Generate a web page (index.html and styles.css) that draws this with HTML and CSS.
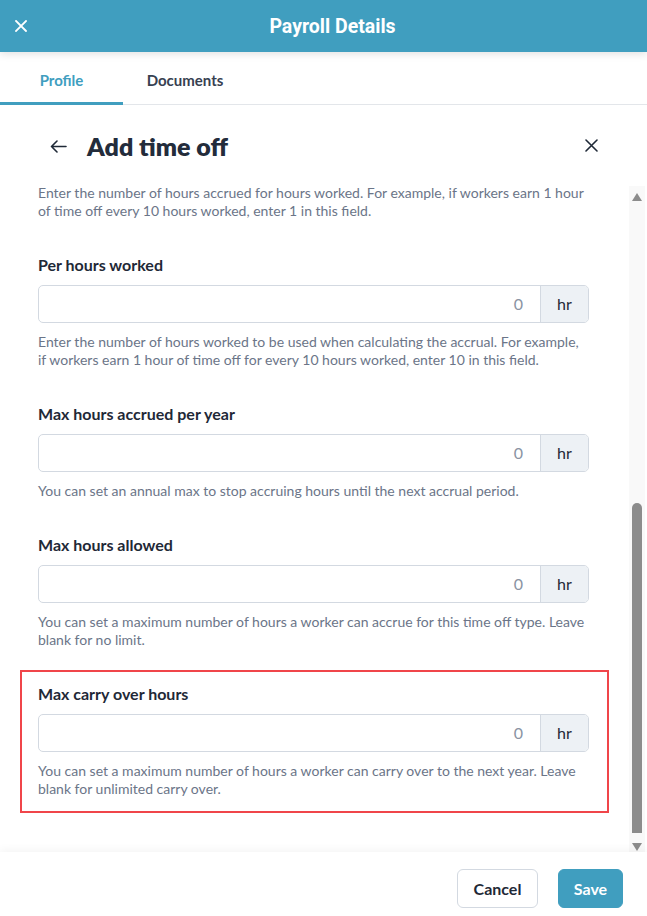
FILE: index.html
```html
<!DOCTYPE html>
<html lang="en">
<head>
<meta charset="utf-8">
<title>Payroll Details</title>
<link rel="stylesheet" href="styles.css">
</head>
<body>
<div class="app">
  <header class="topbar">
    <button class="topbar-close" aria-label="Close">
      <svg width="12" height="12" viewBox="0 0 12 12"><path d="M1 1L11 11M11 1L1 11" stroke="#fff" stroke-width="1.8" stroke-linecap="square"/></svg>
    </button>
    <h1 class="topbar-title">Payroll Details</h1>
    <span class="topbar-spacer"></span>
  </header>

  <nav class="tabs">
    <div class="tab tab-active">Profile</div>
    <div class="tab">Documents</div>
  </nav>

  <div class="panel-head">
    <svg class="back" width="17" height="13" viewBox="0 0 17 13"><path d="M16 6.5H1.5M7 1L1.5 6.5L7 12" fill="none" stroke="#1f2937" stroke-width="1.6" stroke-linecap="round" stroke-linejoin="round"/></svg>
    <h2 class="panel-title">Add time off</h2>
    <svg class="panel-close" width="13" height="13" viewBox="0 0 13 13"><path d="M1 1L12 12M12 1L1 12" stroke="#1f2937" stroke-width="1.6" stroke-linecap="round"/></svg>
  </div>

  <div class="scroll">
    <div class="content">
      <p class="help">Enter the number of hours accrued for hours worked. For example, if workers earn 1 hour of time off every 10 hours worked, enter 1 in this field.</p>

      <div class="field">
        <label class="label">Per hours worked</label>
        <div class="input-group"><div class="input">0</div><div class="addon">hr</div></div>
        <p class="help">Enter the number of hours worked to be used when calculating the accrual. For example, if workers earn 1 hour of time off for every 10 hours worked, enter 10 in this field.</p>
      </div>

      <div class="field">
        <label class="label">Max hours accrued per year</label>
        <div class="input-group"><div class="input">0</div><div class="addon">hr</div></div>
        <p class="help">You can set an annual max to stop accruing hours until the next accrual period.</p>
      </div>

      <div class="field">
        <label class="label">Max hours allowed</label>
        <div class="input-group"><div class="input">0</div><div class="addon">hr</div></div>
        <p class="help">You can set a maximum number of hours a worker can accrue for this time off type. Leave blank for no limit.</p>
      </div>

      <div class="field field-highlight">
        <label class="label">Max carry over hours</label>
        <div class="input-group"><div class="input">0</div><div class="addon">hr</div></div>
        <p class="help">You can set a maximum number of hours a worker can carry over to the next year. Leave blank for unlimited carry over.</p>
      </div>
    </div>

    <div class="scrollbar">
      <span class="arrow arrow-up"></span>
      <span class="thumb-gap"></span>
      <span class="thumb"></span>
      <span class="arrow arrow-down"></span>
    </div>
  </div>

  <footer class="footer">
    <button class="btn btn-cancel">Cancel</button>
    <button class="btn btn-save">Save</button>
  </footer>
</div>
</body>
</html>
```

FILE: styles.css
```css
* { box-sizing: border-box; }
html, body { margin: 0; padding: 0; }
body {
  font-family: Lato, "Noto Sans", "Liberation Sans", sans-serif;
  background: #fff;
  color: #1f2937;
  width: 647px;
  height: 916px;
  overflow: hidden;
}
.app {
  display: flex;
  flex-direction: column;
  height: 916px;
}
.topbar {
  height: 52px;
  flex: none;
  background: #409ebf;
  display: grid;
  grid-template-columns: 60px 1fr 60px;
  align-items: center;
  box-shadow: 0 2px 8px rgba(0,0,0,0.12);
  position: relative;
  z-index: 2;
}
.topbar-close {
  background: none;
  border: 0;
  padding: 0;
  margin-left: 15px;
  width: 12px;
  height: 12px;
  display: flex;
}
.topbar-title {
  margin: 0;
  text-align: center;
  font-family: Roboto, "Liberation Sans", sans-serif;
  font-weight: 700;
  font-size: 19.5px;
  color: #fff;
  padding-left: 18px;
}
.tabs {
  height: 53px;
  flex: none;
  display: flex;
  border-bottom: 1px solid #e3e6ea;
}
.tab {
  width: 123px;
  text-align: center;
  font-size: 15px;
  font-weight: 700;
  color: #374151;
  padding-top: 19px;
  border-bottom: 3px solid transparent;
  margin-bottom: -1px;
}
.tab + .tab { width: 124px; }
.tab-active {
  color: #409ebf;
  border-bottom-color: #409ebf;
}
.panel-head {
  flex: none;
  height: 78px;
  display: flex;
  align-items: center;
  padding: 3px 49px 0 50px;
}
.back { flex: none; margin-top: 1px; }
.panel-title {
  margin: 0 0 0 20px;
  font-size: 25px;
  font-weight: 800;
  color: #232c3b;
  flex: 1;
}
.panel-close { flex: none; }
.scroll {
  flex: 1;
  display: flex;
  min-height: 0;
  overflow: hidden;
}
.content {
  flex: 1;
  padding: 1px 40px 0 38px;
}
.help {
  margin: 0;
  font-size: 14px;
  line-height: 18px;
  color: #6b7588;
}
.field { margin-top: 35px; }
.label {
  display: block;
  font-size: 16px;
  font-weight: 700;
  line-height: 20px;
  color: #1f2937;
}
.input-group {
  display: flex;
  height: 38px;
  margin-top: 10px;
  border: 1px solid #d3d9e1;
  border-radius: 5px;
  overflow: hidden;
}
.input {
  flex: 1;
  text-align: right;
  padding-right: 17px;
  font-size: 16px;
  line-height: 36px;
  color: #8a93a3;
}
.addon {
  width: 48px;
  flex: none;
  background: #edf1f5;
  border-left: 1px solid #d3d9e1;
  text-align: center;
  font-size: 16px;
  line-height: 36px;
  color: #1f2937;
}
.input-group + .help { margin-top: 10px; }
.field-highlight {
  margin: 21px -20px 0 -18px;
  padding: 12px 18px 13px 16px;
  border: 2px solid #f0454a;
}
.scrollbar {
  width: 16px;
  flex: none;
  margin-right: 2px;
  margin-top: 3px;
  background: #f9f9f9;
  display: flex;
  flex-direction: column;
  align-items: center;
}
.arrow {
  width: 0;
  height: 0;
  border-left: 5px solid transparent;
  border-right: 5px solid transparent;
  flex: none;
}
.arrow-up {
  margin-top: 7px;
  border-bottom: 8px solid #8c8c8c;
}
.thumb-gap { height: 302px; flex: none; }
.thumb {
  width: 10px;
  height: 330px;
  flex: none;
  background: #8c8c8c;
  border-radius: 5px 5px 0 0;
}
.arrow-down {
  margin-top: 10px;
  border-top: 8px solid #8c8c8c;
}
.footer {
  height: 64px;
  flex: none;
  display: flex;
  justify-content: flex-end;
  gap: 20px;
  padding: 17px 24px 0 0;
  background: #fff;
  box-shadow: 0 -3px 8px rgba(0,0,0,0.04);
  position: relative;
}
.btn {
  height: 39px;
  border-radius: 6px;
  font-family: Lato, "Noto Sans", sans-serif;
  font-size: 16px;
  font-weight: 700;
  padding: 0;
}
.btn-cancel {
  width: 81px;
  background: #fff;
  border: 1px solid #d3d9e1;
  color: #1f2937;
}
.btn-save {
  width: 65px;
  background: #409ebf;
  border: 1px solid #409ebf;
  color: #fff;
}
```
